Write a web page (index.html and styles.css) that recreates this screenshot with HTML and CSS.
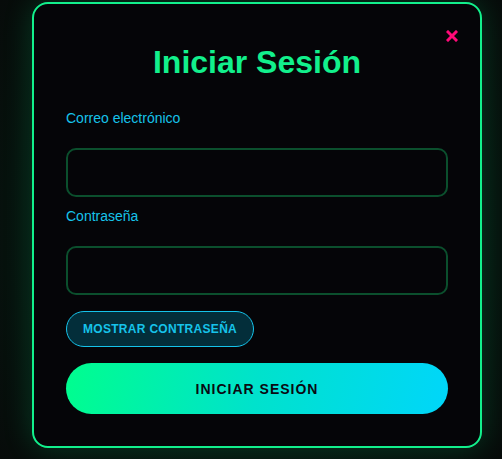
FILE: index.html
```html
<!DOCTYPE html>
<html lang="es">
<head>
<meta charset="utf-8">
<title>Iniciar Sesión</title>
<link rel="stylesheet" href="styles.css">
</head>
<body>
<div class="backdrop">
  <div class="modal">
    <button class="close" aria-label="Cerrar">
      <svg width="12" height="12" viewBox="0 0 12 12"><path d="M2 2L10 10M10 2L2 10" stroke="#ff0a78" stroke-width="3" stroke-linecap="square"/></svg>
    </button>
    <h2 class="title">Iniciar Sesión</h2>
    <form class="form">
      <div class="field">
        <label class="label">Correo electrónico</label>
        <input class="input" type="email">
      </div>
      <div class="field">
        <label class="label">Contraseña</label>
        <input class="input" type="password">
      </div>
      <div class="toggle-row">
        <button type="button" class="toggle">MOSTRAR CONTRASEÑA</button>
      </div>
      <button type="button" class="submit">INICIAR SESIÓN</button>
    </form>
  </div>
</div>
</body>
</html>
```

FILE: styles.css
```css
* { box-sizing: border-box; }
html, body { margin: 0; height: 100%; }
body {
  background: #080c0b;
  font-family: "Liberation Sans", Arial, sans-serif;
  overflow: hidden;
}
.backdrop {
  height: 100%;
  padding: 2px 20px 11px 32px;
  display: flex;
  background: radial-gradient(ellipse at 50% 50%, #0a2a1c 0%, #06130e 60%, #070b0a 100%);
}
.modal {
  position: relative;
  width: 450px;
  height: 446px;
  background: #050508;
  border: 2px solid #12f08c;
  border-radius: 16px;
  box-shadow: 0 0 30px rgba(0, 255, 136, 0.18);
  padding: 32px 32px 32px;
}
.close {
  position: absolute;
  top: 24px;
  right: 20px;
  background: none;
  border: 0;
  padding: 2px;
  display: flex;
  cursor: pointer;
}
.title {
  margin: 6px 0 0;
  text-align: center;
  color: #12f08c;
  font-size: 32px;
  line-height: 40px;
  font-weight: 700;
}
.form {
  margin-top: 26px;
  display: flex;
  flex-direction: column;
}
.field { display: flex; flex-direction: column; }
.label {
  color: #16c3ea;
  font-size: 14px;
  line-height: 20px;
  margin: 0 0 20px;
}
.field + .field .label { margin-top: 9px; }
.input {
  height: 49px;
  background: #050508;
  border: 2px solid #0b4f2d;
  border-radius: 10px;
  outline: none;
}
.toggle-row { display: flex; margin-top: 16px; }
.toggle {
  height: 36px;
  padding: 0 16px;
  border-radius: 18px;
  border: 1px solid #16c3ea;
  background: #032e3a;
  color: #16c3ea;
  font-family: "Liberation Sans", Arial, sans-serif;
  font-weight: 700;
  font-size: 12px;
  letter-spacing: 0.3px;
}
.submit {
  margin-top: 16px;
  height: 51px;
  border: 0;
  border-radius: 26px;
  background: linear-gradient(100deg, #00fe8e 0%, #00e2cc 50%, #00d6fa 100%);
  color: #0a0a12;
  font-family: "Liberation Sans", Arial, sans-serif;
  font-weight: 700;
  font-size: 14px;
  letter-spacing: 1px;
}
```
